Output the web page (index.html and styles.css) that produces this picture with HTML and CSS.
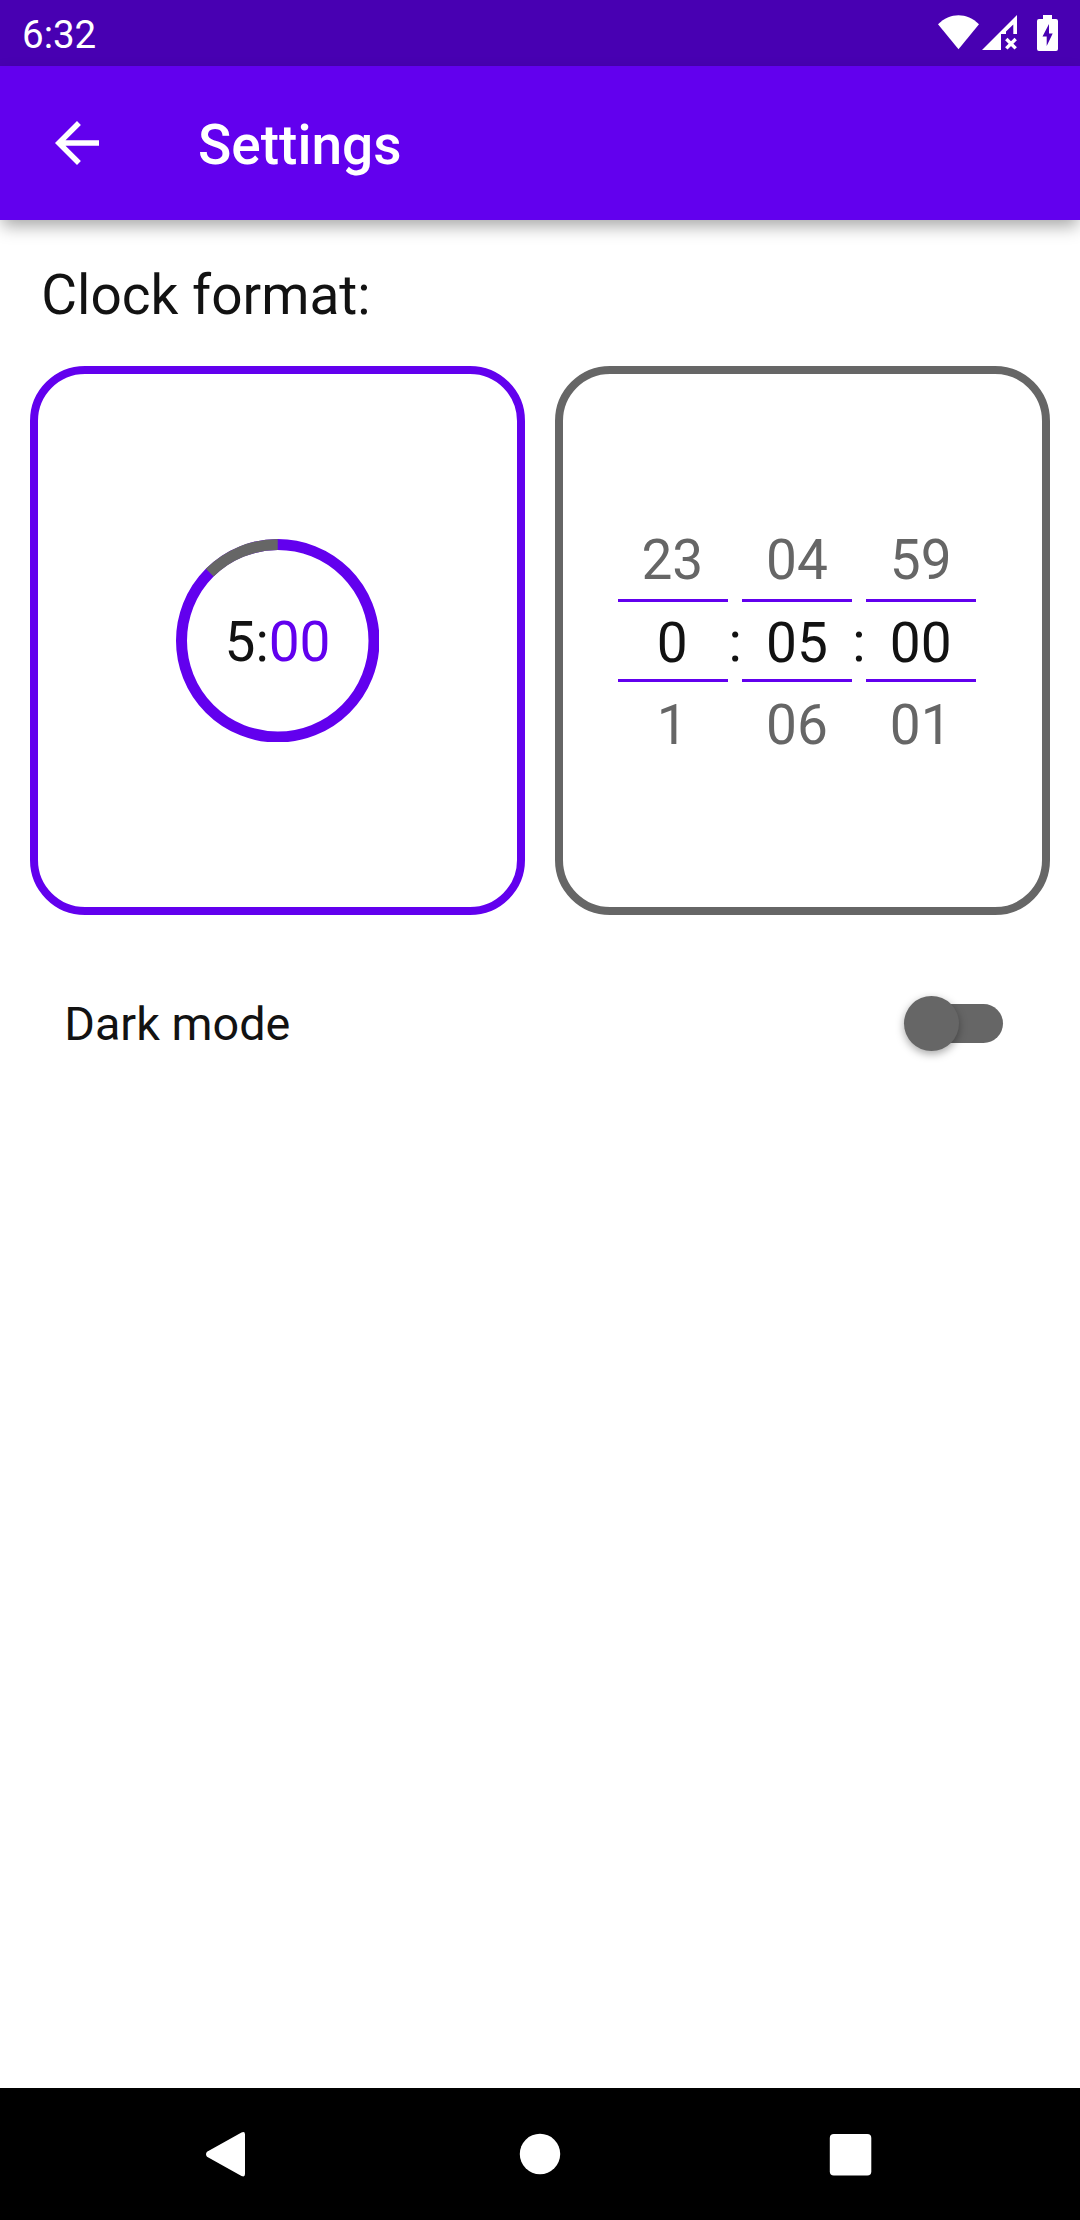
FILE: index.html
```html
<!DOCTYPE html>
<html lang="en">
<head>
<meta charset="utf-8">
<title>Settings</title>
<link rel="stylesheet" href="styles.css">
</head>
<body>
<div class="screen">
  <div class="status-bar">
    <span class="status-time">6:32</span>
    <svg class="status-icons" width="130" height="66" viewBox="930 0 130 66" fill="#fff">
      <path d="M958.5 49.3 938 24.2c12-12 29-12 41 0z"/>
      <path d="M982 50 1017 15v19h-3.700v-9.500L1006 31.500V34h-5v16z"/>
      <path d="m1006.300 39 9.400 9.400m0-9.400-9.400 9.400" fill="none" stroke="#fff" stroke-width="3.400"/>
      <path fill-rule="evenodd" d="M1043 15h9v4h4q2 0 2 2v28q0 2-2 2h-17q-2 0-2-2V21q0-2 2-2h4zM1049 24l-6.500 12.500h4.200V46l6-12.500h-3.700z"/>
    </svg>
  </div>
  <header class="app-bar">
    <svg class="back" width="66" height="66" viewBox="0 0 24 24" fill="#fff"><path d="M20 11H7.830l5.590-5.590L12 4l-8 8 8 8 1.410-1.410L7.830 13H20v-2z"/></svg>
    <h1 class="title">Settings</h1>
  </header>
  <main class="content">
    <h2 class="label">Clock format:</h2>
    <div class="cards">
      <section class="card selected">
        <div class="dial">
          <svg class="ring" viewBox="-101.750 -101.750 203.500 203.500" fill="none" stroke-width="11">
            <circle r="96.250" stroke="#6200ee"/>
            <path d="M-68.060-68.060A96.250 96.250 0 0 1 0-96.250" stroke="#666"/>
          </svg>
          <span class="time">5:<span class="seconds">00</span></span>
        </div>
      </section>
      <section class="card">
        <div class="picker">
          <div class="wheel hours"><span>23</span><span class="now">0</span><span class="next">1</span></div>
          <span class="colon">:</span>
          <div class="wheel"><span>04</span><span class="now">05</span><span class="next">06</span></div>
          <span class="colon">:</span>
          <div class="wheel"><span>59</span><span class="now">00</span><span class="next">01</span></div>
        </div>
      </section>
    </div>
    <div class="option">
      <span class="option-name">Dark mode</span>
      <div class="switch"><div class="thumb"></div></div>
    </div>
  </main>
  <nav class="nav-bar">
    <svg width="1080" height="132" viewBox="0 0 1080 132" fill="#fff">
      <path d="M207 63.800 241.500 44.600q3.500-1.600 3.500 2V86q0 3.600-3.500 2L207 68.800q-2-2.500 0-5z"/>
      <circle cx="540" cy="66" r="20.200"/>
      <rect x="829.800" y="46" width="41.500" height="41.500" rx="4"/>
    </svg>
  </nav>
</div>
</body>
</html>
```
FILE: styles.css
```css
body {
  margin: 0;
  background: #fff;
  color: #121212;
  font-family: Roboto, "Liberation Sans", sans-serif;
}

.screen {
  display: flex;
  flex-direction: column;
  width: 1080px;
  height: 2220px;
}

.status-bar {
  display: flex;
  justify-content: space-between;
  align-items: center;
  box-sizing: border-box;
  height: 66px;
  padding: 0 20px 0 22px;
  background: #4800b2;
  color: #fff;
}

.status-time {
  font-size: 38.5px;
  padding-top: 3px;
}

.app-bar {
  display: flex;
  align-items: center;
  box-sizing: border-box;
  height: 154px;
  padding-left: 44px;
  background: #6200ee;
  color: #fff;
  box-shadow: 0 8px 16px -2px rgba(0, 0, 0, 0.35);
}

.title {
  margin: 4px 0 0 88px;
  font-size: 55px;
  font-weight: 500;
}

.content {
  flex: 1;
  padding: 0 30.25px;
}

.label {
  margin: 0;
  padding: 41px 0 0 11px;
  height: 105px;
  font-size: 55px;
  font-weight: 400;
  line-height: 68px;
}

.cards {
  display: grid;
  grid-template-columns: 1fr 1fr;
  gap: 30.5px;
  height: 549px;
}

.card {
  display: flex;
  align-items: center;
  justify-content: center;
  border: 8px solid #666;
  border-radius: 55px;
}

.card.selected {
  border-color: #6200ee;
}

.dial {
  display: grid;
  place-items: center;
  width: 203.5px;
  height: 203.5px;
}

.ring,
.time {
  grid-area: 1 / 1;
}

.time,
.picker {
  font-size: 55px;
}

.time {
  padding-top: 3px;
}

.seconds {
  color: #6200ee;
}

.picker {
  display: flex;
  align-items: center;
  margin-right: 11px;
}

.wheel {
  display: grid;
  grid-template-rows: repeat(3, 83px);
  width: 110px;
  line-height: 88px;
  text-align: center;
  color: #666;
}

.hours span {
  padding-right: 2px;
}

.wheel .now {
  border: solid #6200ee;
  border-width: 3px 0;
  line-height: 82px;
  color: #121212;
}

.wheel .next {
  line-height: 86px;
}

.colon {
  width: 13.7px;
  padding-top: 3px;
  text-align: center;
}

.option {
  display: flex;
  align-items: center;
  justify-content: space-between;
  height: 110px;
  margin: 53px 47px 0 34px;
}

.option-name {
  padding-top: 2px;
  font-size: 46.75px;
}

.switch {
  display: flex;
  align-items: center;
  width: 93px;
  height: 39px;
  border-radius: 20px;
  background: #666;
}

.thumb {
  width: 55px;
  height: 55px;
  margin-left: -6px;
  border-radius: 50%;
  background: #666;
  box-shadow: 0 3px 8px rgba(0, 0, 0, 0.35);
}

.nav-bar {
  height: 132px;
  background: #000;
}
```
